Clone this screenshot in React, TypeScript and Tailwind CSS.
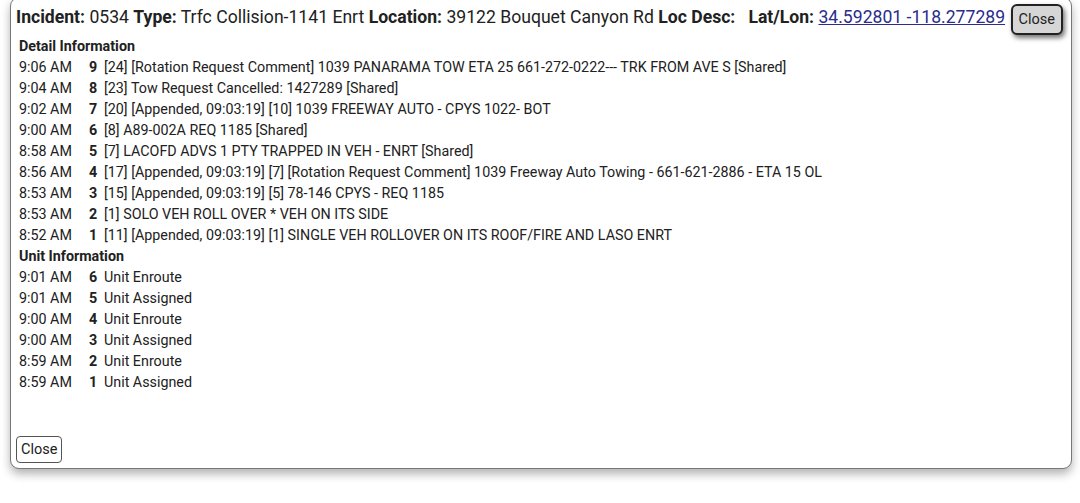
import React from 'react'

type Row = { time: string; num: string; text: string }

const DETAIL: Row[] = [
  { time: '9:06 AM', num: '9', text: '[24] [Rotation Request Comment] 1039 PANARAMA TOW ETA 25 661-272-0222--- TRK FROM AVE S [Shared]' },
  { time: '9:04 AM', num: '8', text: '[23] Tow Request Cancelled: 1427289 [Shared]' },
  { time: '9:02 AM', num: '7', text: '[20] [Appended, 09:03:19] [10] 1039 FREEWAY AUTO - CPYS 1022- BOT' },
  { time: '9:00 AM', num: '6', text: '[8] A89-002A REQ 1185 [Shared]' },
  { time: '8:58 AM', num: '5', text: '[7] LACOFD ADVS 1 PTY TRAPPED IN VEH - ENRT [Shared]' },
  { time: '8:56 AM', num: '4', text: '[17] [Appended, 09:03:19] [7] [Rotation Request Comment] 1039 Freeway Auto Towing - 661-621-2886 - ETA 15 OL' },
  { time: '8:53 AM', num: '3', text: '[15] [Appended, 09:03:19] [5] 78-146 CPYS - REQ 1185' },
  { time: '8:53 AM', num: '2', text: '[1] SOLO VEH ROLL OVER * VEH ON ITS SIDE' },
  { time: '8:52 AM', num: '1', text: '[11] [Appended, 09:03:19] [1] SINGLE VEH ROLLOVER ON ITS ROOF/FIRE AND LASO ENRT' },
]

const UNITS: Row[] = [
  { time: '9:01 AM', num: '6', text: 'Unit Enroute' },
  { time: '9:01 AM', num: '5', text: 'Unit Assigned' },
  { time: '9:00 AM', num: '4', text: 'Unit Enroute' },
  { time: '9:00 AM', num: '3', text: 'Unit Assigned' },
  { time: '8:59 AM', num: '2', text: 'Unit Enroute' },
  { time: '8:59 AM', num: '1', text: 'Unit Assigned' },
]

function LogRows({ rows }: { rows: Row[] }) {
  return (
    <div className="grid grid-cols-[70px_15px_1fr]">
      {rows.map((r, i) => (
        <React.Fragment key={i}>
          <span>{r.time}</span>
          <span className="font-bold">{r.num}</span>
          <span className="whitespace-nowrap">{r.text}</span>
        </React.Fragment>
      ))}
    </div>
  )
}

export default function App() {
  return (
    <div className="w-[1080px] h-[503px] bg-white overflow-hidden text-[#212121]" style={{ fontFamily: 'Roboto, "Liberation Sans", sans-serif' }}>
      <div className="relative ml-[10px] mt-[-3px] w-[1062px] h-[472px] rounded-[9px] border border-[#777] bg-white shadow-[0_5px_10px_rgba(0,0,0,0.3)] flex flex-col">
        {/* Header */}
        <div className="pl-[5px] pt-[6px] h-[38px] text-[17.6px] whitespace-nowrap leading-[26px]">
          <b>Incident:</b> 0534 <b>Type:</b> Trfc Collision-1141 Enrt <b>Location:</b> 39122 Bouquet Canyon Rd <b>Loc Desc:</b>&nbsp;&nbsp; <b>Lat/Lon:</b>{' '}
          <a href="#" className="underline text-[#2b2c8c]">34.592801 -118.277289</a>
        </div>
        <button className="absolute right-[8px] top-[6px] h-[31px] px-[6px] rounded-[6px] border-2 border-[#222] bg-[#d6d6d6] text-[14.5px] shadow-[2px_3px_5px_rgba(0,0,0,0.55)]">
          Close
        </button>

        {/* Body */}
        <div className="pl-[8px] text-[14.3px] leading-[21px]">
          <div className="font-bold">Detail Information</div>
          <LogRows rows={DETAIL} />
          <div className="font-bold">Unit Information</div>
          <LogRows rows={UNITS} />
        </div>

        <div className="mt-auto pl-[5px] pb-[5px]">
          <button className="h-[27px] px-[4px] rounded-[4px] border border-[#555] bg-white text-[14.5px]">Close</button>
        </div>
      </div>
    </div>
  )
}
